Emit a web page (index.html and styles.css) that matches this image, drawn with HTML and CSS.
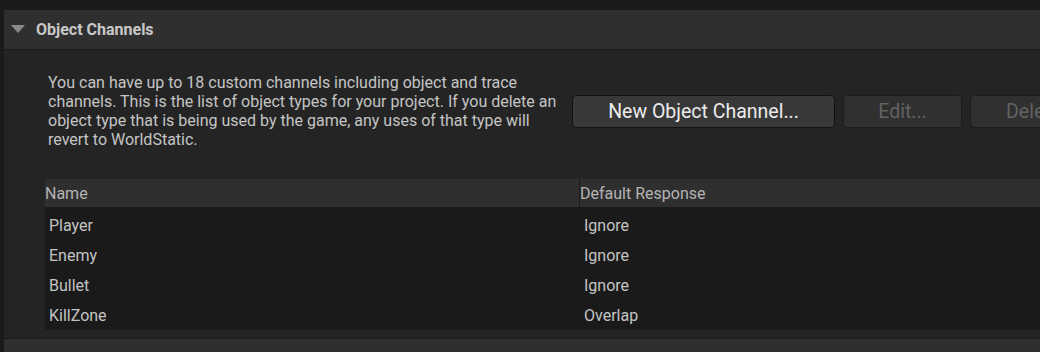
FILE: index.html
```html
<!DOCTYPE html>
<html>
<head>
    <link rel="stylesheet" href="styles.css">
</head>
<body>
    <div class="details">
        <div class="section">
            <div class="section-header">
                <span class="arrow"></span>
                <span class="section-title">Object Channels</span>
            </div>
            <div class="section-body">
                <div class="intro-row">
                    <p class="intro-text">You can have up to 18 custom channels including object and trace channels. This is the list of object types for your project. If you delete an object type that is being used by the game, any uses of that type will revert to WorldStatic.</p>
                    <div class="button-row">
                        <button class="btn btn-new">New Object Channel...</button>
                        <button class="btn btn-edit" disabled>Edit...</button>
                        <button class="btn btn-delete" disabled>Delete...</button>
                    </div>
                </div>

                <div class="channel-table">
                    <div class="table-head">
                        <div class="col-name">Name</div>
                        <div class="col-response">Default Response</div>
                    </div>
                    <div class="table-body">
                        <div class="table-row">
                            <div class="col-name">Player</div>
                            <div class="col-response">Ignore</div>
                        </div>
                        <div class="table-row">
                            <div class="col-name">Enemy</div>
                            <div class="col-response">Ignore</div>
                        </div>
                        <div class="table-row">
                            <div class="col-name">Bullet</div>
                            <div class="col-response">Ignore</div>
                        </div>
                        <div class="table-row">
                            <div class="col-name">KillZone</div>
                            <div class="col-response">Overlap</div>
                        </div>
                    </div>
                </div>
            </div>
        </div>

        <div class="section">
            <div class="section-header">
                <span class="arrow"></span>
                <span class="section-title">Trace Channels</span>
            </div>
        </div>
    </div>
</body>
</html>
```

FILE: styles.css
```css
body {
    margin: 0;
    background-color: #1a1a1a;
    font-family: Roboto, 'Liberation Sans', sans-serif;
    font-size: 16px;
    color: #c0c0c0;
    overflow: hidden;
}

.details {
    padding-top: 10px;
    padding-left: 4px;
    width: 1200px;
}

.section {
    margin-bottom: 1px;
}

.section-header {
    display: flex;
    align-items: center;
    height: 38px;
    padding-bottom: 1px;
    background-color: #2f2f2f;
    border-bottom: 1px solid #1a1a1a;
}

.arrow {
    width: 0;
    height: 0;
    margin-left: 7px;
    margin-right: 11px;
    border-left: 7.5px solid transparent;
    border-right: 7.5px solid transparent;
    border-top: 8px solid #8a8a8a;
}

.section-title {
    font-weight: bold;
    color: #c8c8c8;
}

.section-body {
    background-color: #242424;
    padding: 23px 0 8px 0;
}

.intro-row {
    display: flex;
    align-items: center;
    padding-left: 44px;
    margin-bottom: 30px;
}

.intro-text {
    width: 515px;
    margin: 0;
    line-height: 19px;
    color: #c4c4c4;
}

.button-row {
    display: flex;
    gap: 8px;
    margin-left: 9px;
}

.btn {
    box-sizing: border-box;
    height: 33px;
    font-family: Roboto, 'Liberation Sans', sans-serif;
    font-size: 19.5px;
    border-radius: 4px;
    padding: 0;
}

.btn-new {
    width: 263px;
    background-color: #383838;
    color: #ececec;
    border: 1px solid #121212;
}

.btn-edit,
.btn-delete {
    background-color: #303030;
    color: #626262;
    border: 1px solid #1c1c1c;
}

.btn-edit {
    width: 119px;
}

.btn-delete {
    width: 130px;
    text-align: left;
    padding-left: 35px;
}

.channel-table {
    margin-left: 41px;
}

.table-head {
    display: flex;
    height: 28px;
    align-items: center;
    background-color: #2f2f2f;
    color: #b4b4b4;
}

.table-head .col-name {
    width: 534px;
}

.table-head .col-response {
    align-self: stretch;
    display: flex;
    align-items: center;
    border-left: 1px solid #1a1a1a;
}

.table-body {
    background-color: #1a1a1a;
    padding-top: 3px;
}

.table-row {
    display: flex;
    height: 30px;
    align-items: center;
    color: #c4c4c4;
}

.table-row .col-name {
    box-sizing: border-box;
    width: 535px;
    padding-left: 4px;
}

.table-row .col-response {
    padding-left: 4px;
}
```
